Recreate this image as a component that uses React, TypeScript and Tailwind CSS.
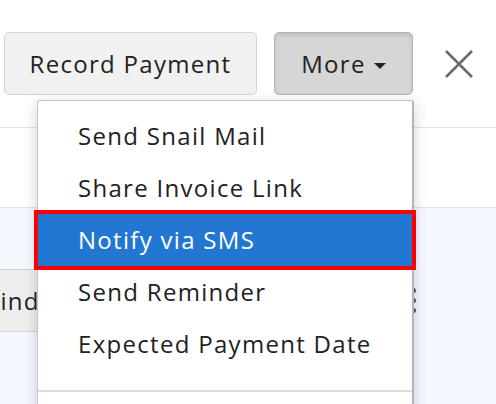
import React from "react";

const font = { fontFamily: '"Open Sans", "Liberation Sans", sans-serif' };

export default function App() {
  const items = ["Send Snail Mail", "Share Invoice Link", "Notify via SMS", "Send Reminder", "Expected Payment Date"];
  return (
    <div className="relative w-[496px] h-[404px] overflow-hidden bg-white text-[#222]" style={font}>
      {/* top bar */}
      <div className="h-[128px] flex items-start pt-[32px] pl-[4px] border-b border-[#e3e3e3]">
        <button className="h-[63px] w-[253px] rounded-[5px] border border-[#d4d4d4] bg-[#f1f1f1] text-[24px] tracking-[1.3px] text-[#222]">
          Record Payment
        </button>
        <button className="ml-[17px] h-[63px] w-[139px] rounded-[5px] border border-[#b5b5b5] bg-[#d6d6d6] shadow-[inset_0_2px_4px_rgba(0,0,0,0.12)] text-[24px] tracking-[1.3px] text-[#222] flex items-center justify-center gap-[8px]">
          <span>More</span>
          <span className="mt-[4px] w-0 h-0 border-l-[6px] border-r-[6px] border-t-[6px] border-l-transparent border-r-transparent border-t-[#222]" />
        </button>
        <svg className="ml-[32px] mt-[18px]" width="28" height="28" viewBox="0 0 28 28">
          <path d="M1 1 L27 27 M27 1 L1 27" stroke="#6b6b6b" strokeWidth="2.6" />
        </svg>
      </div>
      {/* middle white section */}
      <div className="h-[80px] border-b border-[#e3e3e3]" />
      {/* light blue area */}
      <div className="h-[200px] bg-[#f5f8fe] pt-[61px]">
        <div className="flex items-center">
          <div className="h-[63px] w-[110px] -ml-[61px] rounded-[5px] border border-[#d4d4d4] bg-[#eeeeee] flex items-center pl-[6px] text-[24px] tracking-[1.3px] whitespace-nowrap">
            Remind
          </div>
          <div className="ml-auto mr-[80px] flex flex-col gap-[5px]">
            <span className="block w-[5px] h-[5px] rounded-full bg-[#555]" />
            <span className="block w-[5px] h-[5px] rounded-full bg-[#555]" />
            <span className="block w-[5px] h-[5px] rounded-full bg-[#555]" />
          </div>
        </div>
      </div>

      {/* dropdown */}
      <div className="absolute left-[37px] top-[100px] w-[377px] h-[320px] bg-white border border-[#c4c4c4] border-r-2 border-r-[#b4b4b4] rounded-t-[3px] shadow-[0_4px_14px_rgba(60,70,100,0.25)] pt-[9px]">
        {items.map((t, i) => (
          <div
            key={t}
            className={
              "relative h-[52px] flex items-center pl-[40px] text-[24px] tracking-[1.3px] " +
              (i === 2 ? "bg-[#2277d3] text-white" : "text-[#222]")
            }
          >
            {t}
            {i === 2 && <div className="absolute -left-[4px] -right-[4px] -top-[4px] -bottom-[4px] border-4 border-[#ff0000]" />}
          </div>
        ))}
        <div className="mt-[20px] h-[2px] bg-[#dcdcdc]" />
      </div>
    </div>
  );
}
